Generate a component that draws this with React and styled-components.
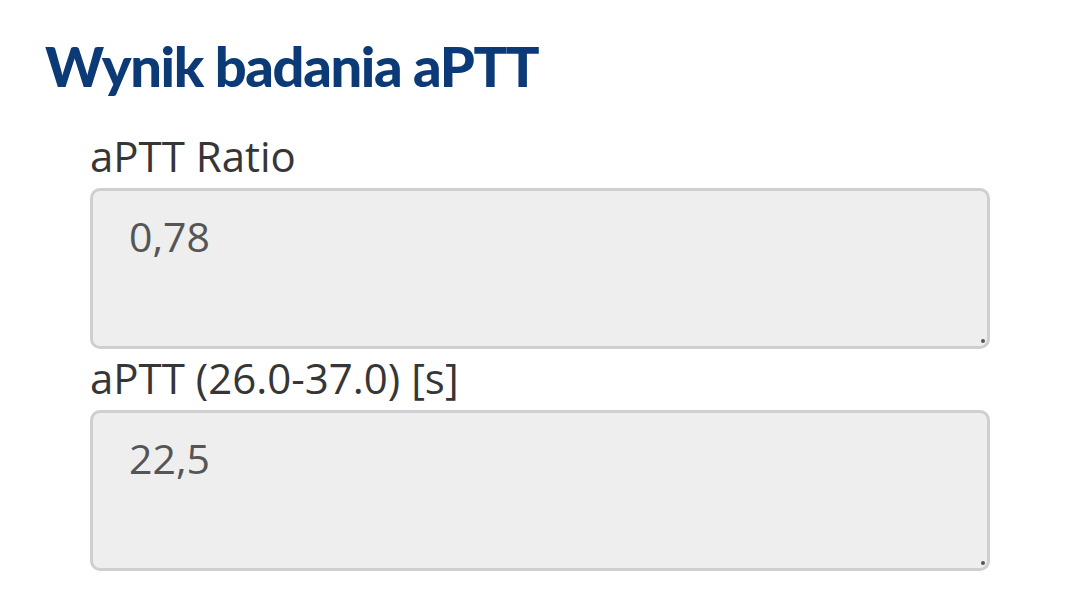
import React from 'react';
import styled, { createGlobalStyle } from 'styled-components';

const GlobalStyle = createGlobalStyle`
  html, body {
    margin: 0;
    padding: 0;
    background: #ffffff;
  }
`;

const Page = styled.div`
  padding: 36px 90px 0 45px;
  font-family: 'Open Sans', sans-serif;
`;

const Title = styled.h1`
  font-family: 'Lato', sans-serif;
  font-weight: 900;
  font-size: 56px;
  letter-spacing: -1.4px;
  color: #0b3a77;
  margin: 0 0 36px;
  line-height: 60px;
`;

const Form = styled.div`
  margin-left: 45px;
  display: flex;
  flex-direction: column;
`;

const Label = styled.label`
  display: block;
  font-size: 42px;
  line-height: 48px;
  color: #363636;
  margin: 0 0 8px 0;
`;

const FieldWrap = styled.div`
  position: relative;
  margin-bottom: 5px;

  &::after {
    content: '';
    position: absolute;
    right: 5px;
    bottom: 6px;
    width: 4px;
    height: 4px;
    border-radius: 50%;
    background: #555;
  }
`;

const Area = styled.textarea`
  display: block;
  box-sizing: border-box;
  width: 100%;
  height: 161px;
  background: #eeeeee;
  border: 3px solid #cfcfcf;
  border-radius: 10px;
  padding: 21px 36px;
  font-family: 'Open Sans', sans-serif;
  font-size: 41px;
  line-height: 48px;
  color: #555555;
  resize: none;
  outline: none;
`;

const fields = [
  { label: 'aPTT Ratio', value: '0,78' },
  { label: 'aPTT (26.0-37.0) [s]', value: '22,5' },
];

export default function App() {
  return (
    <>
      <GlobalStyle />
      <Page>
        <Title>Wynik badania aPTT</Title>
        <Form>
          {fields.map((f) => (
            <div key={f.label}>
              <Label>{f.label}</Label>
              <FieldWrap>
                <Area readOnly value={f.value} />
              </FieldWrap>
            </div>
          ))}
        </Form>
      </Page>
    </>
  );
}
